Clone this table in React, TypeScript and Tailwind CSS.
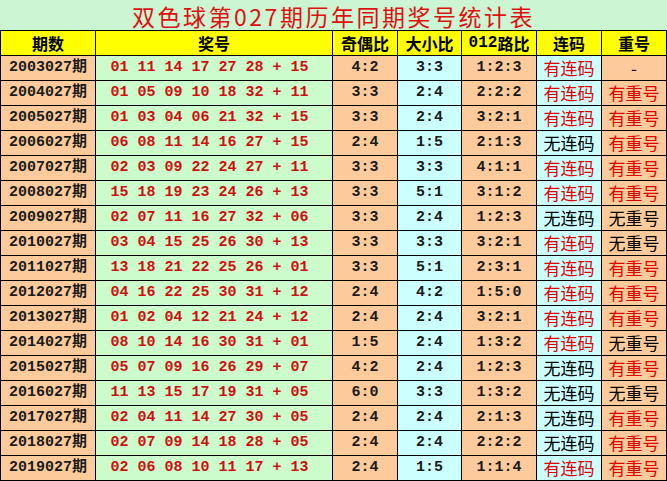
import React from 'react'

type Row = {
  issue: string
  nums: string
  odd: string
  size: string
  road: string
  lian: string
  chong: string
}

const raw: string[] = [
  '2003027期|01 11 14 17 27 28 + 15|4:2|3:3|1:2:3|有连码|-',
  '2004027期|01 05 09 10 18 32 + 11|3:3|2:4|2:2:2|有连码|有重号',
  '2005027期|01 03 04 06 21 32 + 15|3:3|2:4|3:2:1|有连码|有重号',
  '2006027期|06 08 11 14 16 27 + 15|2:4|1:5|2:1:3|无连码|有重号',
  '2007027期|02 03 09 22 24 27 + 11|3:3|3:3|4:1:1|有连码|有重号',
  '2008027期|15 18 19 23 24 26 + 13|3:3|5:1|3:1:2|有连码|有重号',
  '2009027期|02 07 11 16 27 32 + 06|3:3|2:4|1:2:3|无连码|无重号',
  '2010027期|03 04 15 25 26 30 + 13|3:3|3:3|3:2:1|有连码|无重号',
  '2011027期|13 18 21 22 25 26 + 01|3:3|5:1|2:3:1|有连码|有重号',
  '2012027期|04 16 22 25 30 31 + 12|2:4|4:2|1:5:0|有连码|有重号',
  '2013027期|01 02 04 12 21 24 + 12|2:4|2:4|3:2:1|有连码|有重号',
  '2014027期|08 10 14 16 30 31 + 01|1:5|2:4|1:3:2|有连码|无重号',
  '2015027期|05 07 09 16 26 29 + 07|4:2|2:4|1:2:3|无连码|有重号',
  '2016027期|11 13 15 17 19 31 + 05|6:0|3:3|1:3:2|无连码|无重号',
  '2017027期|02 04 11 14 27 30 + 05|2:4|2:4|2:1:3|无连码|有重号',
  '2018027期|02 07 09 14 18 28 + 05|2:4|2:4|2:2:2|无连码|有重号',
  '2019027期|02 06 08 10 11 17 + 13|2:4|1:5|1:1:4|有连码|有重号',
]

const rows: Row[] = raw.map((line) => {
  const [issue, nums, odd, size, road, lian, chong] = line.split('|')
  return { issue, nums, odd, size, road, lian, chong }
})

const mono = "font-['Liberation_Mono','Noto_Sans_CJK_SC',monospace]"
const cjk = "font-['Noto_Sans_CJK_SC','Liberation_Sans',sans-serif]"
const cell = 'h-[25px] border-l border-t border-black flex items-center justify-center'

export default function App() {
  return (
    <div className="w-[667px] h-[481px] overflow-hidden bg-[#ccf5d4]">
      <div className={`h-[30px] pt-[3px] flex items-center justify-center text-[23px] leading-none tracking-[2.5px] text-[#e01010] ${cjk}`}>
        双色球第027期历年同期奖号统计表
      </div>
      <div className="grid grid-cols-[95px_237px_65px_64px_75px_65px_65px] border-r border-b border-black">
        {['期数', '奖号', '奇偶比', '大小比', '012路比', '连码', '重号'].map((h) => (
          <div key={h} className={`${cell} bg-[#ffff00] text-[16px] font-bold text-black ${cjk}`}>
            {h.startsWith('012') ? (
              <>
                <span className={`${mono} text-[16px]`}>012</span>
                <span>路比</span>
              </>
            ) : (
              h
            )}
          </div>
        ))}
        {rows.map((r) => (
          <React.Fragment key={r.issue}>
            <div className={`${cell} bg-[#fdcb9b] text-[15px] font-bold text-[#1a1a1a] ${mono}`}>{r.issue}</div>
            <div className={`${cell} bg-[#ccfccc] pr-[9px] text-[15px] font-bold text-[#d01010] whitespace-pre ${mono}`}>
              {r.nums}
            </div>
            <div className={`${cell} bg-[#fdcb9b] text-[15px] font-bold text-[#1a1a1a] ${mono}`}>{r.odd}</div>
            <div className={`${cell} bg-[#ccffff] text-[15px] font-bold text-[#1a1a1a] ${mono}`}>{r.size}</div>
            <div className={`${cell} bg-[#fdcb9b] text-[15px] font-bold text-[#1a1a1a] ${mono}`}>{r.road}</div>
            <div
              className={`${cell} bg-[#ccffff] text-[17px] ${cjk} ${
                r.lian.startsWith('有') ? 'text-[#e00000]' : 'text-black'
              }`}
            >
              {r.lian}
            </div>
            <div
              className={`${cell} bg-[#fdcb9b] text-[17px] ${cjk} ${
                r.chong.startsWith('有') ? 'text-[#e00000]' : 'text-black'
              }`}
            >
              {r.chong}
            </div>
          </React.Fragment>
        ))}
      </div>
    </div>
  )
}
